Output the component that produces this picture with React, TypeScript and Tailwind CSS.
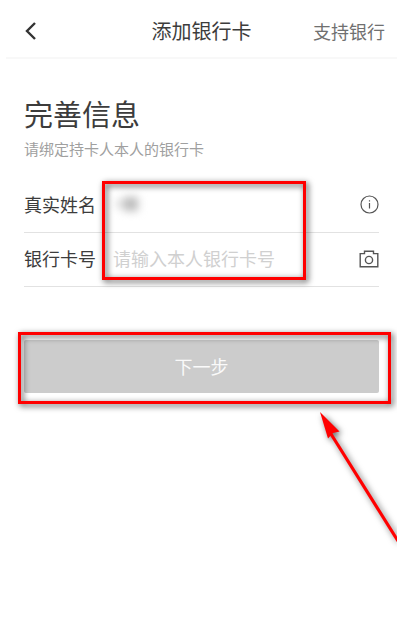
import React, { useState } from 'react';

const CameraIcon = () => (
  <svg width="20" height="18" viewBox="0 0 20 18" fill="none" stroke="#555555" strokeWidth="1.4">
    <path d="M1.2 3.6h4.3V1.2h9v2.4h4.3v13.2H1.2z" />
    <circle cx="10" cy="10" r="3.6" />
  </svg>
);

const InfoIcon = () => (
  <svg width="19" height="19" viewBox="0 0 19 19" fill="none" stroke="#555555" strokeWidth="1.2">
    <circle cx="9.5" cy="9.5" r="8.5" />
    <path d="M9.5 8v5.5M9.5 5.2v1.4" />
  </svg>
);

// Red frame that marks a step of the guide
const Highlight = ({ className }: { className: string }) => (
  <div
    className={`pointer-events-none absolute border-3 border-[#ff0000] drop-shadow-[2px_2px_3px_rgba(0,0,0,0.75)] ${className}`}
  />
);

const Arrow = () => (
  <svg
    className="pointer-events-none absolute top-full right-0 mt-2 drop-shadow-[2px_2px_3px_rgba(0,0,0,0.6)]"
    width="77"
    height="132"
    viewBox="0 0 77 132"
  >
    <path d="M11 22L78 129" stroke="#ff0000" strokeWidth="3.2" />
    <path d="M0 0L19.5 19.5L13 21L8 26.5Z" fill="#ff0000" />
  </svg>
);

export default function App() {
  const [name, setName] = useState('');
  const [cardNumber, setCardNumber] = useState('');

  return (
    <div className="min-h-screen bg-white pr-[7px] pl-[6px] font-['Noto_Sans_CJK_SC',sans-serif] text-[#3c3c3c]">
      <div className="overflow-x-clip">
        <header className="grid h-[59px] grid-cols-[1fr_auto_1fr] items-center border-b-2 border-[#f8f8f8] pt-1 pr-3 pl-4">
          <button type="button" aria-label="返回" className="justify-self-start pl-0.5">
            <svg width="14" height="20" viewBox="0 0 14 20" fill="none" stroke="#333333" strokeWidth="2.4">
              <path d="M11 2L3 10l8 8" />
            </svg>
          </button>
          <h1 className="pr-1 text-[20px] leading-6">添加银行卡</h1>
          <a href="#banks" className="justify-self-end text-[18px] leading-6 text-[#707070]">
            支持银行
          </a>
        </header>

        <main className="relative px-[18px] pt-[34px]">
          <h2 className="text-[29px] leading-10">完善信息</h2>
          <p className="mt-1 text-[15px] leading-6 text-[#a0a0a0]">请绑定持卡人本人的银行卡</p>

          <form onSubmit={(e) => e.preventDefault()}>
            <div className="relative mt-[18px] text-[18px] leading-6">
              <div className="relative flex h-[54px] items-center border-b border-[#e2e2e2] pb-1">
                <label htmlFor="name" className="w-[89px] shrink-0">真实姓名</label>
                <input
                  id="name"
                  type="text"
                  value={name}
                  onChange={(e) => setName(e.target.value)}
                  className="min-w-0 flex-1 outline-none"
                />
                <button type="button" aria-label="姓名说明" className="shrink-0 pt-0.5">
                  <InfoIcon />
                </button>
                {/* masked name */}
                <div className="pointer-events-none absolute left-[92px] flex items-center blur-[4px]">
                  <div className="h-2 w-2 bg-[#dddddd]" />
                  <div className="h-3.5 w-3.5 bg-[#bbbbbb]" />
                </div>
              </div>
              <div className="flex h-[54px] items-center border-b border-[#e2e2e2] pb-1">
                <label htmlFor="card" className="w-[89px] shrink-0">银行卡号</label>
                <input
                  id="card"
                  type="text"
                  value={cardNumber}
                  onChange={(e) => setCardNumber(e.target.value)}
                  placeholder="请输入本人银行卡号"
                  className="min-w-0 flex-1 outline-none placeholder:text-[#d0d0d0]"
                />
                <button type="button" aria-label="扫描银行卡" className="shrink-0 pt-0.5">
                  <CameraIcon />
                </button>
              </div>
              <Highlight className="top-[2px] right-[73px] bottom-[7px] left-[78px]" />
            </div>

            <div className="relative -mx-1.5 mt-[45px] px-1.5 pt-2 pb-[11px]">
              <button
                type="submit"
                className="block h-[53px] w-full rounded-xs bg-[#cccccc] pb-0.5 text-[18px] leading-6 text-[#fafafa]"
              >
                下一步
              </button>
              <Highlight className="top-0 -right-1.5 bottom-0 left-0" />
            </div>
          </form>
          <div className="absolute right-0 bottom-0">
            <Arrow />
          </div>
        </main>
      </div>
    </div>
  );
}
